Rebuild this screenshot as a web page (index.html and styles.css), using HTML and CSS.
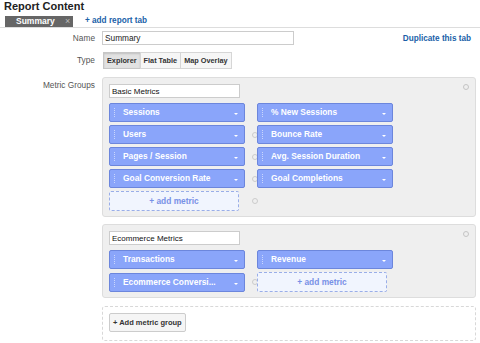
FILE: index.html
```html
<!DOCTYPE html>
<html lang="en">
<head>
    <meta charset="UTF-8">
    <title>Report Content</title>
    <link rel="stylesheet" href="styles.css">
</head>
<body>
    <h1 class="title">Report Content</h1>
    <div class="tabs">
        <span class="tab">Summary <b class="tab-x">&times;</b></span>
        <a class="add-tab">+ add report tab</a>
    </div>

    <div class="row row-name">
        <label class="lbl">Name</label>
        <div class="name-line">
            <input class="name-input" type="text" value="Summary">
            <a class="dup">Duplicate this tab</a>
        </div>
    </div>

    <div class="row row-type">
        <label class="lbl">Type</label>
        <div class="seg">
            <button class="seg-btn on">Explorer</button><button class="seg-btn">Flat Table</button><button class="seg-btn">Map Overlay</button>
        </div>
    </div>

    <div class="row row-groups">
        <label class="lbl">Metric Groups</label>
        <div class="groups">
            <div class="group">
                <span class="ring close"></span>
                <input class="group-input" type="text" value="Basic Metrics">
                <div class="grid">
                    <div class="pill"><i class="grip"></i>Sessions<i class="arr"></i></div>
                    <span></span>
                    <div class="pill"><i class="grip"></i>% New Sessions<i class="arr"></i></div>

                    <div class="pill"><i class="grip"></i>Users<i class="arr"></i></div>
                    <span class="ring"></span>
                    <div class="pill"><i class="grip"></i>Bounce Rate<i class="arr"></i></div>

                    <div class="pill"><i class="grip"></i>Pages / Session<i class="arr"></i></div>
                    <span class="ring"></span>
                    <div class="pill"><i class="grip"></i>Avg. Session Duration<i class="arr"></i></div>

                    <div class="pill"><i class="grip"></i>Goal Conversion Rate<i class="arr"></i></div>
                    <span class="ring"></span>
                    <div class="pill"><i class="grip"></i>Goal Completions<i class="arr"></i></div>

                    <div class="add-metric">+ add metric</div>
                    <span class="ring"></span>
                    <span></span>
                </div>
            </div>

            <div class="group">
                <span class="ring close"></span>
                <input class="group-input" type="text" value="Ecommerce Metrics">
                <div class="grid">
                    <div class="pill"><i class="grip"></i>Transactions<i class="arr"></i></div>
                    <span></span>
                    <div class="pill"><i class="grip"></i>Revenue<i class="arr"></i></div>

                    <div class="pill"><i class="grip"></i>Ecommerce Conversi...<i class="arr"></i></div>
                    <span class="ring"></span>
                    <div class="add-metric">+ add metric</div>
                </div>
            </div>

            <div class="add-group">
                <button class="add-group-btn">+ Add metric group</button>
            </div>
        </div>
    </div>
</body>
</html>
```

FILE: styles.css
```css
html, body {margin: 0; padding: 0; background: #fff;}
body {font-family: "Liberation Sans", Arial, sans-serif; font-size: 9px; color: #333; width: 480px; height: 343px; overflow: hidden;}
a {color: #1a5fa8; font-weight: bold; cursor: pointer;}

.title {margin: 0; padding: 0 4px; height: 16px; font-size: 11px; line-height: 13px; color: #222;}

.tabs {display: flex; align-items: flex-end; height: 11px; border-bottom: 1px solid #ddd; padding-left: 5px;}
.tab {display: inline-block; width: 68px; height: 11px; line-height: 11px; box-sizing: border-box; padding-left: 11px; background: #666; color: #fff; font-weight: bold; font-size: 8.5px;}
.tab-x {color: #bbb; font-weight: normal; margin-left: 8px; font-size: 9px;}
.add-tab {margin-left: 12px; font-size: 8.2px; line-height: 11px; position: relative; top: -1px;}

.row {display: grid; grid-template-columns: 95px 1fr; column-gap: 7px;}
.lbl {text-align: right; color: #555; font-size: 8.3px;}

.row-name {margin-top: 3px; height: 14px;}
.row-name .lbl {line-height: 14px;}
.name-line {display: flex; align-items: center; justify-content: space-between; padding-right: 9px;}
.name-input {width: 192px; height: 14px; box-sizing: border-box; border: 1px solid #ccc; padding: 0 2px; font: 8.3px "Liberation Sans", Arial, sans-serif; color: #222;}
.dup {font-size: 8.2px;}

.row-type {margin-top: 7px; height: 17px;}
.row-type .lbl {line-height: 17px;}
.seg {display: flex; padding-left: 1px;}
.seg-btn {height: 17px; box-sizing: border-box; border: 1px solid #d6d6d6; background: #f6f6f6; padding: 0 3px; font: bold 7.3px "Liberation Sans", Arial, sans-serif; color: #333; margin-left: -1px;}
.seg-btn:first-child {margin-left: 0;}
.seg-btn.on {background: #e2e2e2; border-color: #c6c6c6; box-shadow: inset 0 1px 2px rgba(0,0,0,0.15);}

.row-groups {margin-top: 8px;}
.row-groups .lbl {padding-top: 3px;}
.groups {display: flex; flex-direction: column; gap: 7px; padding-right: 4px;}

.group {position: relative; background: #efefef; border: 1px solid #ddd; border-radius: 3px; padding: 6px 7px 5px 6px;}
.group-input {display: block; width: 131px; height: 14px; box-sizing: border-box; border: 1px solid #ccc; padding: 0 2px; font: 8px "Liberation Sans", Arial, sans-serif; color: #111; background: #fff;}

.grid {display: grid; grid-template-columns: 136px 12px 136px; row-gap: 3px; margin-top: 5px; align-items: center;}

.pill {position: relative; height: 19px; box-sizing: border-box; background: #8aa5fa; border: 1px solid #6c86dc; border-radius: 2px; color: #fff; font-weight: bold; font-size: 8.4px; line-height: 17px; padding-left: 13px;}
.grip {position: absolute; left: 4px; top: 4px; width: 1px; height: 9px; background: repeating-linear-gradient(to bottom, rgba(255,255,255,0.55) 0 1px, transparent 1px 2px);}
.arr {position: absolute; right: 6px; top: 9px; width: 0; height: 0; border-left: 2.5px solid transparent; border-right: 2.5px solid transparent; border-top: 2px solid #fff;}

.ring {display: block; width: 6px; height: 6px; box-sizing: border-box; border: 1.5px solid #ccc; border-radius: 50%; justify-self: end; margin-right: -1px;}
.ring.close {position: absolute; right: 6px; top: 6px; margin: 0; border-color: #c4c4c4;}

.add-metric {height: 20px; box-sizing: border-box; border: 1px dashed #9aaee8; background: #f1f5fe; border-radius: 2px; color: #7891e6; font-weight: bold; font-size: 8.4px; line-height: 18px; text-align: center; width: 130px;}

.add-group {height: 35px; box-sizing: border-box; border: 1px dashed #d8d8d8; border-radius: 3px; padding: 6px 6px; margin-top: 1px;}
.add-group-btn {height: 19px; box-sizing: border-box; border: 1px solid #ccc; border-radius: 2px; background: #f5f5f5; padding: 0 3px; font: bold 7.5px "Liberation Sans", Arial, sans-serif; color: #333;}
```
